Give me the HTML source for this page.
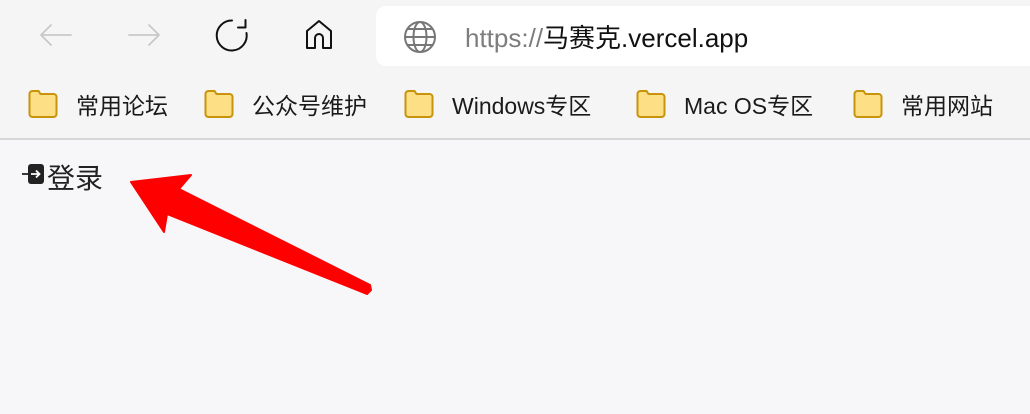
<!DOCTYPE html>
<html><head><meta charset="utf-8"><style>
body{margin:0;width:1030px;height:414px;background:#f7f7f9;font-family:"Liberation Sans","Noto Sans CJK SC",sans-serif;position:relative;overflow:hidden}
.top{position:absolute;left:0;top:0;width:1030px;height:138px;background:#f5f5f6;border-bottom:2px solid #d6d6d6}
.addr{position:absolute;left:376px;top:6px;width:680px;height:60px;background:#fff;border-radius:10px}
.url{position:absolute;left:465px;top:18px;font-size:26px;color:#111;white-space:nowrap}
.url span{color:#7d7d7d}
.bm{position:absolute;top:87px;font-size:23px;color:#1a1a1a;white-space:nowrap;display:flex;align-items:center}
.bm svg{margin-right:16px}
svg{position:absolute}
.bm svg{position:static}
</style></head><body>
<div class="top"></div>
<div class="addr"></div>
<svg width="1030" height="414" style="left:0;top:0">
<g fill="none" stroke-linecap="round" stroke-linejoin="round">
<path d="M41 35H71M41 35L51 25M41 35L51 45" stroke="#c8c8c8" stroke-width="1.8"/>
<path d="M129 35H159M159 35L149 25M159 35L149 45" stroke="#c8c8c8" stroke-width="1.8"/>
<path d="M246.5 33A15 15 0 1 1 232 20.5" stroke="#111" stroke-width="2"/>
<path d="M238 27.5H245.5V20" stroke="#111" stroke-width="2"/>
<path d="M307 48V31L319 21L331 31V48H323V38A4 4 0 0 0 315 38V48Z" stroke="#111" stroke-width="2"/>
<g stroke="#777" stroke-width="2"><circle cx="420" cy="37" r="15"/><ellipse cx="420" cy="37" rx="6.5" ry="15"/><path d="M405 37H435M408 29H432M408 45H432"/></g>
</g>
<rect x="28" y="164" width="16" height="20" rx="3" fill="#222"/>
<path d="M31 174H39M36 170.5L39.5 174L36 177.5" stroke="#fff" stroke-width="1.8" fill="none"/>
<path d="M22 174H29" stroke="#222" stroke-width="1.8"/>
<polygon points="131,182 191,175 179,189 370,285 371,290 367,294 167,214 164,232" fill="#ff0000" stroke="#ff0000" stroke-width="2" stroke-linejoin="round"/>
</svg>
<div style="position:absolute;left:47px;top:157px;font-size:28px;color:#222">登录</div>
<div class="url"><span>https://</span>马赛克.vercel.app</div>
<div class="bm" style="left:28px"><svg width="32" height="30"><path d="M1.5 5a3 3 0 0 1 3-3h6l2 3h13a3 3 0 0 1 3 3v17a3 3 0 0 1-3 3h-21a3 3 0 0 1-3-3z" fill="#fde086" stroke="#c8940c" stroke-width="2"/></svg>常用论坛</div>
<div class="bm" style="left:204px"><svg width="32" height="30"><path d="M1.5 5a3 3 0 0 1 3-3h6l2 3h13a3 3 0 0 1 3 3v17a3 3 0 0 1-3 3h-21a3 3 0 0 1-3-3z" fill="#fde086" stroke="#c8940c" stroke-width="2"/></svg>公众号维护</div>
<div class="bm" style="left:404px"><svg width="32" height="30"><path d="M1.5 5a3 3 0 0 1 3-3h6l2 3h13a3 3 0 0 1 3 3v17a3 3 0 0 1-3 3h-21a3 3 0 0 1-3-3z" fill="#fde086" stroke="#c8940c" stroke-width="2"/></svg>Windows专区</div>
<div class="bm" style="left:636px"><svg width="32" height="30"><path d="M1.5 5a3 3 0 0 1 3-3h6l2 3h13a3 3 0 0 1 3 3v17a3 3 0 0 1-3 3h-21a3 3 0 0 1-3-3z" fill="#fde086" stroke="#c8940c" stroke-width="2"/></svg>Mac OS专区</div>
<div class="bm" style="left:853px"><svg width="32" height="30"><path d="M1.5 5a3 3 0 0 1 3-3h6l2 3h13a3 3 0 0 1 3 3v17a3 3 0 0 1-3 3h-21a3 3 0 0 1-3-3z" fill="#fde086" stroke="#c8940c" stroke-width="2"/></svg>常用网站</div>
</body></html>
